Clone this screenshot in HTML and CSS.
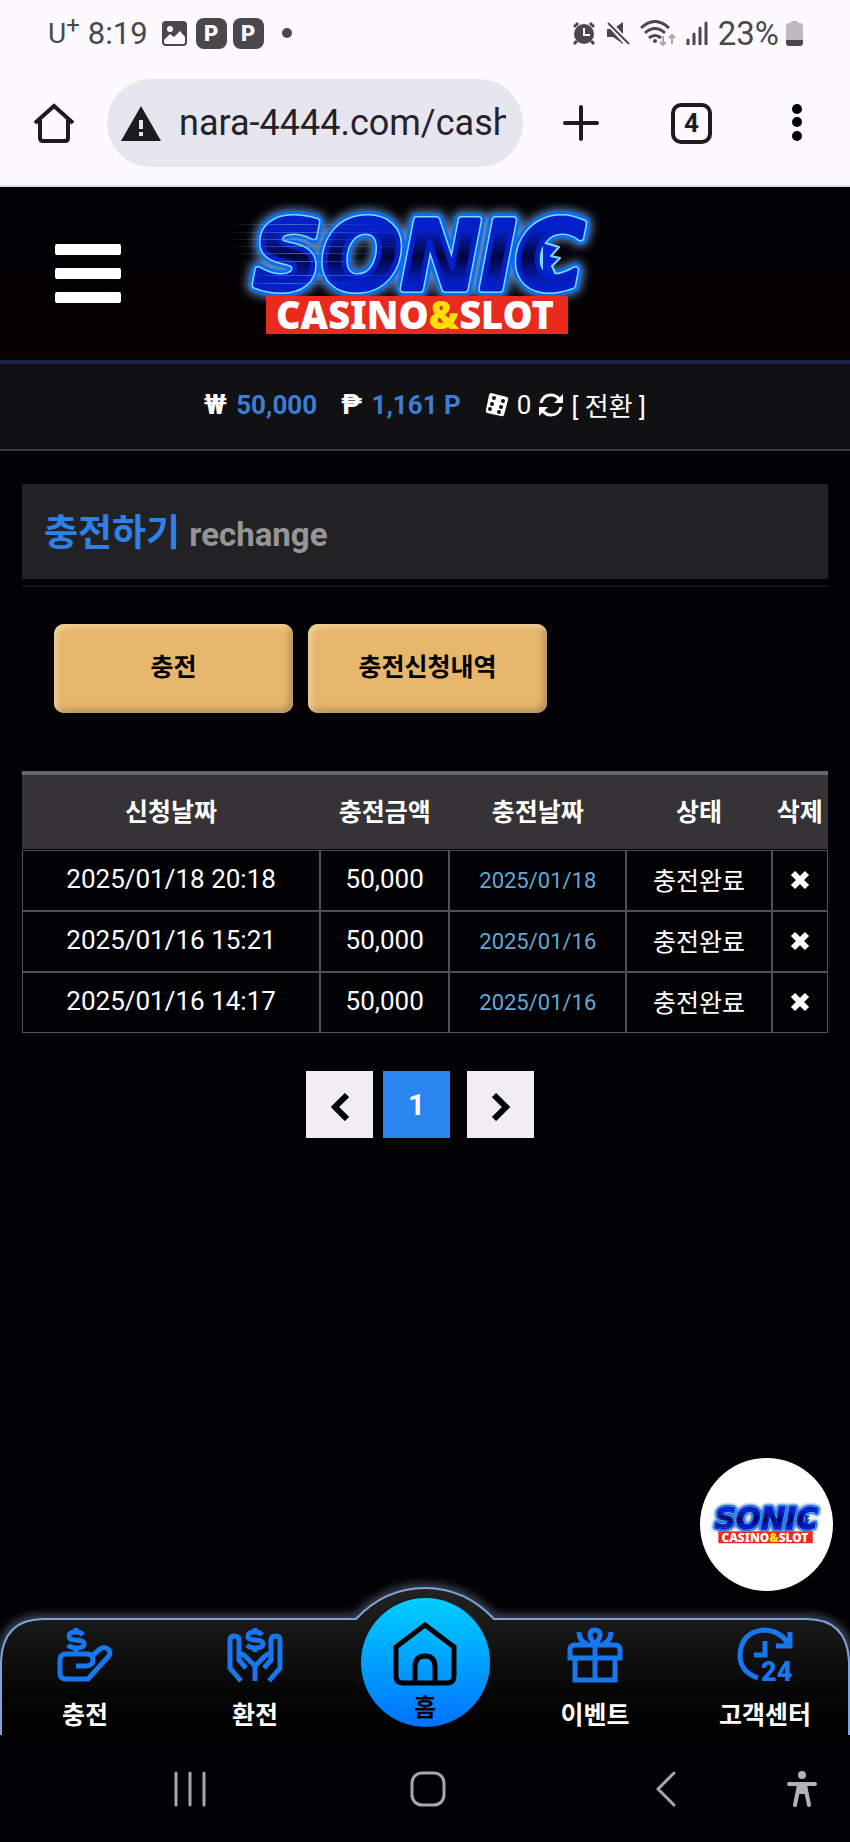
FILE: index.html
```html
<!DOCTYPE html>
<html lang="ko">
<head>
    <meta charset="UTF-8">
    <meta name="viewport" content="width=device-width, initial-scale=1.0">
    <title>충전하기</title>
    <link rel="stylesheet" href="styles.css">
</head>
<body>
    <!-- shared logo -->
    <svg class="defs" width="0" height="0" aria-hidden="true">
        <defs>
            <filter id="glow" x="-20%" y="-40%" width="140%" height="180%">
                <feGaussianBlur stdDeviation="5"/>
            </filter>
            <linearGradient id="speed">
                <stop offset="0" stop-color="#7f95b8" stop-opacity="0"/>
                <stop offset="0.4" stop-color="#7f95b8" stop-opacity="0.6"/>
                <stop offset="1" stop-color="#2f6fe0" stop-opacity="0"/>
            </linearGradient>
            <linearGradient id="letters" x1="0" y1="0" x2="0" y2="1">
                <stop offset="0.25" stop-color="#0420c8"/>
                <stop offset="0.5" stop-color="#020540"/>
                <stop offset="0.75" stop-color="#0420c8"/>
            </linearGradient>
            <symbol id="logo" viewBox="0 0 400 144">
                <g class="logo-word">
                    <text x="34" y="87" stroke="#5b83b8" stroke-width="18" filter="url(#glow)">SONIC</text>
                    <text x="34" y="87" stroke="#0a6cf0" stroke-width="14">SONIC</text>
                    <text x="34" y="87" stroke="#7fdcff" stroke-width="8">SONIC</text>
                    <path d="M322 40l17 5-8 9 9 2-8 8 5 11-15 2z" fill="#0424d8" stroke="#7fdcff" stroke-width="2"/>
                    <text x="34" y="87" fill="url(#letters)" stroke="#0420c8" stroke-width="5">SONIC</text>
                </g>
                <g fill="url(#speed)">
                    <rect x="9" y="22" width="160" height="1"/>
                    <rect x="8" y="30" width="190" height="1"/>
                    <rect x="7" y="37" width="150" height="1"/>
                    <rect x="6" y="44" width="200" height="1"/>
                    <rect x="10" y="51" width="170" height="1"/>
                    <rect x="20" y="59" width="150" height="1"/>
                    <rect x="20" y="73" width="180" height="1"/>
                    <rect x="20" y="81" width="120" height="1"/>
                </g>
                <rect x="46" y="94" width="302" height="38" fill="#ea2a1c"/>
                <text class="logo-sub" x="195" y="127" text-anchor="middle">CASINO<tspan fill="#ffe000">&amp;</tspan>SLOT</text>
            </symbol>
        </defs>
    </svg>

    <div class="status-bar">
        <div class="status-left">
            <span class="carrier">U<sup>+</sup></span>
            <span class="clock">8:19</span>
            <svg class="picture" width="25" height="25" viewBox="0 0 25 25"><rect width="25" height="25" rx="4" fill="#4b484b"/><circle cx="8" cy="8" r="3" fill="#fcfaff"/><path d="M2 19l6-6 4 3 6-6 5 6v5q0 2-2 2H4q-2 0-2-2z" fill="#fcfaff"/></svg>
            <span class="app-badge">P</span>
            <span class="app-badge">P</span>
            <span class="dot"></span>
        </div>
        <div class="status-right">
            <svg width="24" height="24" viewBox="0 0 24 24"><circle cx="12" cy="13" r="10" fill="#4b484b"/><path d="M2 6l4-4M22 6l-4-4M5 20l-3 3M19 20l3 3" stroke="#4b484b" stroke-width="3"/><path d="M12 7v7h6" fill="none" stroke="#fff" stroke-width="2"/></svg>
            <svg width="24" height="24" viewBox="0 0 24 24"><path d="M1 8h6l10-7v22L7 16H1z" fill="#4b484b"/><path d="M1 0l22 24" stroke="#fcfaff" stroke-width="6"/><path d="M2 2l21 21" stroke="#4b484b" stroke-width="2"/></svg>
            <svg width="36" height="26" viewBox="0 0 36 26"><path d="M1 8q14-13 28 0M5 13q10-9 20 0M9 18q6-5 12 0" fill="none" stroke="#4b484b" stroke-width="3"/><circle cx="15" cy="21" r="2" fill="#4b484b"/><path d="M23 16v9m-3-3l3 3 3-3M32 24v-9m-3 3l3-3 3 3" fill="none" stroke="#aaa7ab" stroke-width="2"/></svg>
            <svg width="22" height="24" viewBox="0 0 22 24"><path d="M2 19v4M8 13v10M14 7v16M20 2v21" stroke="#4b484b" stroke-width="3" stroke-linecap="round"/></svg>
            <span class="percent">23%</span>
            <svg width="17" height="25" viewBox="0 0 17 25"><path d="M5 0h7v2h2q3 0 3 3v16q0 4-3 4H3q-3 0-3-4V5q0-3 3-3h2z" fill="#bcbabd"/><path d="M0 19h17v2q0 4-3 4H3q-3 0-3-4z" fill="#4b484b"/></svg>
        </div>
    </div>

    <div class="browser-bar">
        <button class="browser-btn" type="button" aria-label="Home page"><svg width="42" height="42" viewBox="0 0 42 42"><path d="M2 21L21 4l19 17M7 18v18q0 3 3 3h22q3 0 3-3V18" fill="none" stroke="#1d1b20" stroke-width="4"/></svg></button>
        <div class="address">
            <svg width="40" height="35" viewBox="0 0 40 35"><path d="M20 0l20 35H0z" fill="#1d1b20"/><path d="M20 14v9M20 26v4" stroke="#e7e5ee" stroke-width="4"/></svg>
            <input class="url" type="text" value="nara-4444.com/cashin" aria-label="Address">
        </div>
        <button class="browser-btn" type="button" aria-label="New tab"><svg width="36" height="36" viewBox="0 0 36 36"><path d="M18 2v32M2 18h32" stroke="#1d1b20" stroke-width="4" stroke-linecap="round"/></svg></button>
        <button class="browser-btn tabs" type="button" aria-label="Open tabs">4</button>
        <button class="browser-btn" type="button" aria-label="More"><svg width="10" height="38" viewBox="0 0 10 38"><circle cx="5" cy="5" r="5"/><circle cx="5" cy="18" r="5"/><circle cx="5" cy="32" r="5"/></svg></button>
    </div>

    <header class="site-header">
        <button class="menu-btn" type="button" aria-label="Menu"><span></span><span></span><span></span></button>
        <a class="logo-link" href="#" aria-label="Sonic Casino &amp; Slot"><svg width="400" height="144"><use href="#logo"/></svg></a>
    </header>

    <div class="balance">
        <span class="money"><b>₩</b> <strong>50,000</strong></span>
        <span class="point"><b>₱</b> <strong>1,161 P</strong></span>
        <a class="convert" href="#">
            <svg width="24" height="26" viewBox="0 0 24 26"><path d="M6 1l16 4q2 1 1 3l-4 15q-1 2-3 1L2 21q-2-1-1-3L4 3q1-2 2-2z" fill="#fff"/><g fill="#111"><circle cx="9" cy="6" r="2"/><circle cx="7" cy="12" r="2"/><circle cx="5" cy="17" r="2"/><circle cx="18" cy="9" r="2"/><circle cx="16" cy="15" r="2"/><circle cx="14" cy="20" r="2"/></g></svg>
            <span>0</span>
            <svg width="24" height="26" viewBox="0 0 24 26"><path d="M2 11Q4 3 12 3q5 0 8 4M22 15q-2 8-10 8-5 0-8-4" fill="none" stroke="#fff" stroke-width="3"/><path d="M24 2v9h-9zM0 24v-9h9z" fill="#fff"/></svg>
            <span>[ 전환 ]</span>
        </a>
    </div>

    <main class="content">
        <h1 class="page-title">충전하기 <small>rechange</small></h1>

        <div class="tabs-row">
            <button class="gold-btn" type="button">충전</button>
            <button class="gold-btn" type="button">충전신청내역</button>
        </div>

        <table class="history">
            <thead>
                <tr>
                    <th class="col-request">신청날짜</th>
                    <th class="col-amount">충전금액</th>
                    <th class="col-date">충전날짜</th>
                    <th class="col-state">상태</th>
                    <th class="col-delete">삭제</th>
                </tr>
            </thead>
            <tbody>
                <tr>
                    <td>2025/01/18 20:18</td>
                    <td>50,000</td>
                    <td class="date">2025/01/18</td>
                    <td class="state">충전완료</td>
                    <td><button class="delete" type="button" aria-label="삭제"><svg width="20" height="20" viewBox="0 0 20 20"><path d="M3 3l14 14M17 3L3 17" stroke="#fff" stroke-width="6"/></svg></button></td>
                </tr>
                <tr>
                    <td>2025/01/16 15:21</td>
                    <td>50,000</td>
                    <td class="date">2025/01/16</td>
                    <td class="state">충전완료</td>
                    <td><button class="delete" type="button" aria-label="삭제"><svg width="20" height="20" viewBox="0 0 20 20"><path d="M3 3l14 14M17 3L3 17" stroke="#fff" stroke-width="6"/></svg></button></td>
                </tr>
                <tr>
                    <td>2025/01/16 14:17</td>
                    <td>50,000</td>
                    <td class="date">2025/01/16</td>
                    <td class="state">충전완료</td>
                    <td><button class="delete" type="button" aria-label="삭제"><svg width="20" height="20" viewBox="0 0 20 20"><path d="M3 3l14 14M17 3L3 17" stroke="#fff" stroke-width="6"/></svg></button></td>
                </tr>
            </tbody>
        </table>

        <div class="pagination">
            <a href="#" aria-label="이전"><svg width="18" height="28" viewBox="0 0 18 28"><path d="M16 2L4 14l12 12" fill="none" stroke="#000" stroke-width="6"/></svg></a>
            <a class="active" href="#">1</a>
            <a class="next" href="#" aria-label="다음"><svg width="18" height="28" viewBox="0 0 18 28"><path d="M2 2l12 12L2 26" fill="none" stroke="#000" stroke-width="6"/></svg></a>
        </div>
    </main>

    <div class="bottom">
        <a class="floating" href="#" aria-label="Sonic Casino &amp; Slot"><svg width="125" height="45"><use href="#logo"/></svg></a>

        <nav class="bottom-nav">
            <svg class="nav-shape" viewBox="0 0 850 165" aria-hidden="true">
                <defs>
                    <linearGradient id="bar" x1="0" y1="0" x2="0" y2="1">
                        <stop offset="0" stop-color="#222"/>
                        <stop offset="0.7" stop-color="#060606"/>
                        <stop offset="1" stop-color="#000"/>
                    </linearGradient>
                    <filter id="soft" x="-5%" y="-20%" width="110%" height="140%"><feGaussianBlur stdDeviation="5"/></filter>
                </defs>
                <path d="M1 165V91Q3 49 44 49H356Q385 18 425 18T494 49H806Q847 49 849 91V165" fill="none" stroke="#5c6c85" stroke-width="6" filter="url(#soft)"/>
                <path d="M1 167V91Q3 49 44 49H356Q385 18 425 18T494 49H806Q847 49 849 91V167" fill="url(#bar)" stroke="#7fa3d8" stroke-width="2"/>
            </svg>
            <a href="#">
                <svg class="nav-icon" width="54" height="54" viewBox="0 0 54 54">
                    <path d="M18 38h9q8 0 8-6 0-6-6-6H8q-6 0-6 6v13q0 6 6 6h22l20-22q4-4 0-8-4-3-8 0l-8 7"/>
                    <path d="M25 7q-2-3-7-3-7 0-7 4t7 4q8 0 8 4t-8 4q-5 0-8-3M18 0v5M18 19v7"/>
                </svg>
                <span>충전</span>
            </a>
            <a href="#">
                <svg class="nav-icon" width="54" height="54" viewBox="0 0 54 54">
                    <path d="M13 53L2 40V12q0-4 4-4 5 0 5 4v20l7 8M11 27q3-2 6 1l10 10v15M41 53l11-13V12q0-4-4-4-5 0-5 4v20l-7 8M43 27q-3-2-6 1L27 38"/>
                    <path d="M34 7q-2-3-7-3-7 0-7 4t7 4q8 0 8 4t-8 4q-5 0-8-3M27 0v5M27 19v5"/>
                </svg>
                <span>환전</span>
            </a>
            <a class="home" href="#">
                <svg class="home-icon" width="64" height="64" viewBox="0 0 64 64">
                    <path d="M3 25L32 3l29 22v29q0 7-7 7H10q-7 0-7-7zM22 61V45q0-11 10-11t10 11v16"/>
                </svg>
                <span>홈</span>
            </a>
            <a href="#">
                <svg class="nav-icon" width="54" height="54" viewBox="0 0 54 54">
                    <path d="M7 30v22h40V30M27 16v36M2 30V22q0-5 5-5h40q5 0 5 5v8zM27 16q-5-5-5-9 0-5 5-5t5 5q0 4-5 9M11 4q0 9 8 12M43 4q0 9-8 12"/>
                </svg>
                <span>이벤트</span>
            </a>
            <a href="#">
                <svg class="nav-icon" width="54" height="54" viewBox="0 0 54 54">
                    <path d="M20 50Q2 44 2 27 3 4 26 2q15 0 24 13M52 4v14H38M27 13v14H16"/>
                    <text x="23" y="53">24</text>
                </svg>
                <span>고객센터</span>
            </a>
        </nav>
    </div>

    <div class="system-nav">
        <button class="recents" type="button" aria-label="Recent apps"><svg width="32" height="36" viewBox="0 0 32 36"><path d="M2 2v32M16 2v32M30 2v32" stroke="#aaa7aa" stroke-width="3" stroke-linecap="round"/></svg></button>
        <button class="sys-home" type="button" aria-label="Home"><svg width="36" height="36" viewBox="0 0 36 36"><rect x="2" y="2" width="32" height="32" rx="10" fill="none" stroke="#aaa7aa" stroke-width="3"/></svg></button>
        <button class="back" type="button" aria-label="Back"><svg width="20" height="36" viewBox="0 0 20 36"><path d="M18 2L2 18l16 16" fill="none" stroke="#aaa7aa" stroke-width="3" stroke-linecap="round"/></svg></button>
        <button class="access" type="button" aria-label="Accessibility"><svg width="30" height="38" viewBox="0 0 30 38"><circle cx="15" cy="5" r="4" fill="#b5b2b5"/><path d="M2 14h26M15 14v8M12 15l-4 20M18 15l4 20" fill="none" stroke="#b5b2b5" stroke-width="4" stroke-linecap="round"/><path d="M11 13h8v11h-8z" fill="#b5b2b5"/></svg></button>
    </div>
</body>
</html>
```

FILE: styles.css
```css
* {
    box-sizing: border-box;
}

body {
    margin: 0;
    min-height: 100vh;
    display: flex;
    flex-direction: column;
    background-color: #020104;
    color: #ffffff;
    font-family: Roboto, "Noto Sans CJK KR", sans-serif;
    font-size: 25px;
}

a {
    color: inherit;
    text-decoration: none;
}

button {
    border: none;
    padding: 0;
    background: none;
    color: inherit;
    font-family: inherit;
    cursor: pointer;
}

svg {
    display: block;
    flex: none;
}

.defs {
    position: absolute;
}

/* phone status bar */
.status-bar {
    display: flex;
    justify-content: space-between;
    align-items: center;
    height: 66px;
    padding: 0 47px 0 48px;
    background-color: #fcfaff;
    color: #4b484b;
    font-size: 31px;
}

.status-left,
.status-right {
    display: flex;
    align-items: center;
}

.carrier {
    font-size: 28px;
    margin-right: 8px;
}

.carrier sup {
    font-size: 24px;
    line-height: 0;
}

.picture {
    margin: 0 9px 0 14px;
}

.app-badge {
    width: 31px;
    height: 31px;
    margin-right: 6px;
    border-radius: 8px;
    background-color: #4b484b;
    color: #ffffff;
    font-size: 22px;
    font-weight: 900;
    line-height: 31px;
    text-align: center;
}

.dot {
    width: 10px;
    height: 10px;
    margin-left: 12px;
    border-radius: 50%;
    background-color: #4b484b;
}

.status-right {
    gap: 10px;
}

.percent {
    font-size: 33px;
    margin-right: -3px;
}

/* browser toolbar */
.browser-bar {
    display: flex;
    align-items: center;
    padding: 13px 48px 18px 33px;
    border-bottom: 2px solid #dcdae2;
    background-color: #fcfaff;
    color: #1d1b20;
}

.address {
    flex: 1;
    min-width: 0;
    display: flex;
    align-items: center;
    gap: 18px;
    height: 88px;
    margin: 0 40px 0 32px;
    padding: 0 17px 0 14px;
    border-radius: 44px;
    background-color: #e7e5ee;
}

.url {
    flex: 1;
    min-width: 0;
    padding: 0;
    border: none;
    background: none;
    color: #24222b;
    font-family: Roboto, sans-serif;
    font-size: 36px;
}

.tabs {
    width: 41px;
    height: 41px;
    margin: 0 80px 0 72px;
    border: 4px solid #1d1b20;
    border-radius: 10px;
    font-size: 26px;
    font-weight: 700;
}

/* site header */
.site-header {
    display: grid;
    grid-template-columns: 1fr auto 1fr;
    align-items: center;
    height: 177px;
    padding: 0 65px 0 55px;
    border-bottom: 4px solid #17254d;
    background: linear-gradient(#020104 40%, #090102);
}

.menu-btn {
    display: flex;
    flex-direction: column;
    gap: 13px;
    width: 66px;
}

.menu-btn span {
    height: 11px;
    border-radius: 2px;
    background-color: #ffffff;
}

.logo-word {
    font-family: "DejaVu Sans", sans-serif;
    font-size: 94px;
    font-weight: 700;
    font-style: italic;
    stroke-linejoin: round;
}

.logo-sub {
    fill: #ffffff;
    font-family: "Noto Sans", sans-serif;
    font-size: 38px;
    font-weight: 900;
}

.balance {
    display: flex;
    justify-content: center;
    align-items: center;
    gap: 24px;
    height: 87px;
    padding-bottom: 4px;
    border-bottom: 2px solid #3a3a3c;
    background-color: #111113;
    font-size: 26px;
}

.balance b {
    margin-right: 3px;
    font-size: 28px;
}

.balance strong {
    color: #3a7fd5;
}

.convert {
    display: flex;
    align-items: center;
    gap: 8px;
}

/* page content */
.content {
    flex: 1;
    padding: 33px 22px 0;
}

.page-title {
    margin: 0 0 37px;
    padding: 0 22px;
    border-bottom: 2px solid #161618;
    background: linear-gradient(#222224, #222224) no-repeat 0 0 / 100% 95px;
    color: #2f80e8;
    font-size: 37px;
    line-height: 100px;
}

.page-title small {
    color: #969698;
    font-size: 33px;
    font-weight: 700;
}

.tabs-row {
    display: flex;
    gap: 15px;
    margin: 0 32px 58px;
}

.gold-btn {
    width: 239px;
    height: 89px;
    border-radius: 10px;
    background-color: #e5b66b;
    box-shadow: inset 3px 3px 6px #f0d3a0, inset -3px -3px 6px #a98a58;
    color: #000000;
    font-size: 25px;
    font-weight: 700;
    padding-bottom: 7px;
}

.history {
    width: 100%;
    table-layout: fixed;
    border-spacing: 0;
    border-top: 4px solid #666568;
    text-align: center;
}

.history th {
    height: 75px;
    padding: 0 0 4px;
    border-bottom: 1px solid #000000;
    background-color: #353336;
    white-space: nowrap;
}

.history td {
    height: 61px;
    padding: 0 0 4px;
    border: 1px solid #514f52;
    font-size: 26px;
}

.history .date {
    padding: 0;
    color: #62a8d8;
    font-size: 22px;
}

.history .state {
    font-size: 25px;
    padding: 0 0 3px;
}

.col-request {
    width: 37%;
}

.col-amount {
    width: 16%;
}

.col-date {
    width: 22%;
}

.col-state {
    width: 18%;
}

.col-delete {
    width: 7%;
}

.delete {
    display: block;
    margin: 2px auto 0;
}

.pagination {
    display: flex;
    justify-content: center;
    gap: 10px;
    margin-top: 38px;
    padding-right: 10px;
}

.pagination a {
    display: flex;
    justify-content: center;
    align-items: center;
    width: 67px;
    height: 67px;
    background-color: #f0eef2;
    padding-top: 5px;
}

.pagination .active {
    background-color: #2a85f0;
    font-size: 30px;
    font-weight: 700;
    padding: 0;
}

.pagination .next {
    margin-left: 7px;
}

/* fixed bottom menu */
.bottom {
    position: relative;
}

.floating {
    position: absolute;
    right: 17px;
    bottom: 144px;
    display: flex;
    justify-content: center;
    align-items: center;
    width: 133px;
    height: 133px;
    border-radius: 50%;
    background-color: #ffffff;
}

.bottom-nav {
    position: relative;
    display: grid;
    grid-template-columns: repeat(5, 1fr);
    height: 117px;
    font-weight: 700;
}

.nav-shape {
    position: absolute;
    left: 0;
    bottom: 0;
    width: 100%;
}

.bottom-nav a {
    position: relative;
    display: flex;
    flex-direction: column;
    align-items: center;
    gap: 16px;
    padding-top: 10px;
    line-height: 36px;
}

.nav-icon {
    overflow: visible;
    fill: none;
    stroke: #1677ee;
    stroke-width: 5;
}

.nav-icon text {
    fill: #1677ee;
    stroke: none;
    font-family: Roboto, sans-serif;
    font-size: 27px;
    font-weight: 900;
}

.bottom-nav .home {
    justify-self: center;
    gap: 4px;
    width: 129px;
    height: 129px;
    margin-top: -20px;
    padding-top: 24px;
    border-radius: 50%;
    background: linear-gradient(#00cfff, #0072ff);
    color: #000000;
    font-size: 24px;
}

.home-icon {
    fill: none;
    stroke: #000000;
    stroke-width: 5;
}

/* system navigation */
.system-nav {
    display: grid;
    grid-template-columns: 238fr 238fr 238fr 34fr;
    align-items: center;
    justify-items: center;
    height: 107px;
    padding: 0 31px 0 71px;
}
```
